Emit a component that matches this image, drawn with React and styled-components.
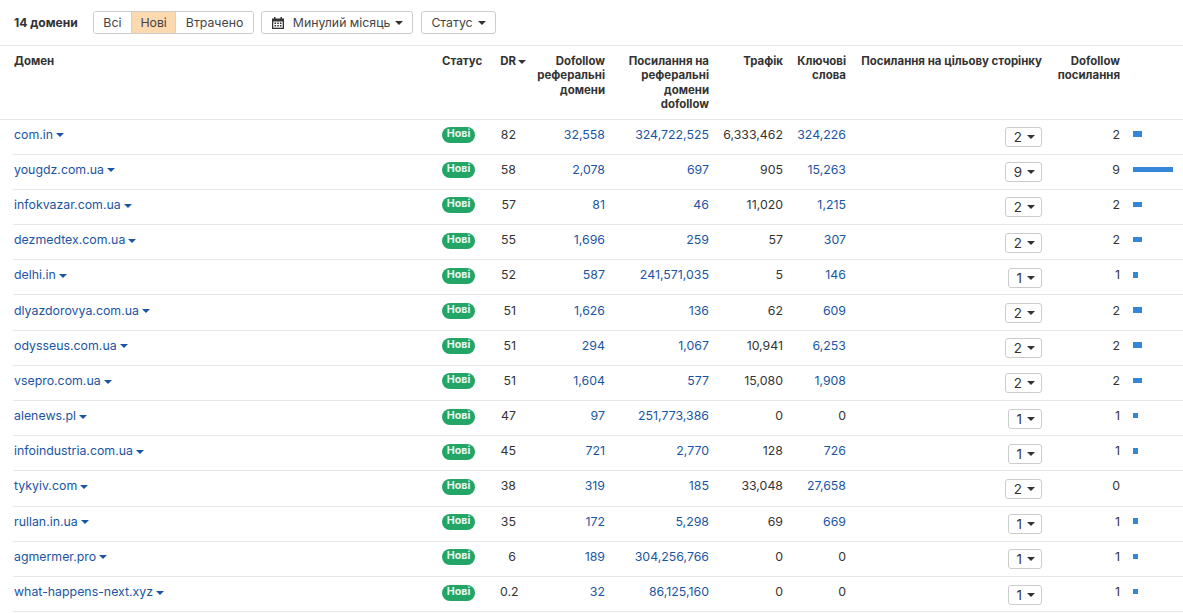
import React from "react";
import styled, { createGlobalStyle } from "styled-components";

const rows = [
  { domain: "com.in", dr: "82", refs: "32,558", links: "324,722,525", traffic: "6,333,462", keywords: "324,226", target: 2, dofollow: 2, bar: 9 },
  { domain: "yougdz.com.ua", dr: "58", refs: "2,078", links: "697", traffic: "905", keywords: "15,263", target: 9, dofollow: 9, bar: 40 },
  { domain: "infokvazar.com.ua", dr: "57", refs: "81", links: "46", traffic: "11,020", keywords: "1,215", target: 2, dofollow: 2, bar: 9 },
  { domain: "dezmedtex.com.ua", dr: "55", refs: "1,696", links: "259", traffic: "57", keywords: "307", target: 2, dofollow: 2, bar: 9 },
  { domain: "delhi.in", dr: "52", refs: "587", links: "241,571,035", traffic: "5", keywords: "146", target: 1, dofollow: 1, bar: 5 },
  { domain: "dlyazdorovya.com.ua", dr: "51", refs: "1,626", links: "136", traffic: "62", keywords: "609", target: 2, dofollow: 2, bar: 9 },
  { domain: "odysseus.com.ua", dr: "51", refs: "294", links: "1,067", traffic: "10,941", keywords: "6,253", target: 2, dofollow: 2, bar: 9 },
  { domain: "vsepro.com.ua", dr: "51", refs: "1,604", links: "577", traffic: "15,080", keywords: "1,908", target: 2, dofollow: 2, bar: 9 },
  { domain: "alenews.pl", dr: "47", refs: "97", links: "251,773,386", traffic: "0", keywords: "0", target: 1, dofollow: 1, bar: 5 },
  { domain: "infoindustria.com.ua", dr: "45", refs: "721", links: "2,770", traffic: "128", keywords: "726", target: 1, dofollow: 1, bar: 5 },
  { domain: "tykyiv.com", dr: "38", refs: "319", links: "185", traffic: "33,048", keywords: "27,658", target: 2, dofollow: 0, bar: 0 },
  { domain: "rullan.in.ua", dr: "35", refs: "172", links: "5,298", traffic: "69", keywords: "669", target: 1, dofollow: 1, bar: 5 },
  { domain: "agmermer.pro", dr: "6", refs: "189", links: "304,256,766", traffic: "0", keywords: "0", target: 1, dofollow: 1, bar: 5 },
  { domain: "what-happens-next.xyz", dr: "0.2", refs: "32", links: "86,125,160", traffic: "0", keywords: "0", target: 1, dofollow: 1, bar: 5 },
];

// gutter, domain, status, dr, refs, links, traffic, keywords, target, dofollow, bar, gutter
const widths = [13, 429, 58, 16, 89, 104, 74, 63, 196, 78, 53, 10];

const GlobalStyle = createGlobalStyle`
  html, body {
    margin: 0;
    background: #fff;
    font-family: Inter, "Noto Sans", sans-serif;
    color: #333;
    overflow: hidden;
  }
`;

const Toolbar = styled.div`
  display: flex;
  align-items: center;
  height: 45px;
  padding-left: 14px;
  border-bottom: 1px solid #e8e8e8;
`;

const Count = styled.div`
  font-size: 12.1px;
  font-weight: 700;
  color: #333;
  margin-right: 15px;
`;

const Segments = styled.div`
  display: flex;
  height: 21px;
  border: 1px solid #ccc;
  border-radius: 3px;
  overflow: hidden;
  margin-right: 7px;
`;

const Segment = styled.div`
  display: flex;
  align-items: center;
  padding: 0 9.5px;
  font-size: 12.3px;
  color: #444;
  background: ${(p) => (p.$active ? "#fdd9b0" : "#fff")};
  box-shadow: ${(p) => (p.$active ? "inset 1px 0 0 #f6cb9b, inset -1px 0 0 #f6cb9b" : "none")};
`;

const FilterButton = styled.div`
  display: flex;
  align-items: center;
  height: 21px;
  padding: 0 9px;
  border: 1px solid #ccc;
  border-radius: 3px;
  font-size: 12.3px;
  color: #444;
  margin-right: 8px;
`;

const CalendarIcon = styled.svg`
  width: 14px;
  height: 14px;
  margin-right: 8px;
`;

const Caret = styled.span`
  display: inline-block;
  width: 0;
  height: 0;
  border-left: 4px solid transparent;
  border-right: 4px solid transparent;
  border-top: 4.5px solid ${(p) => p.$color || "#333"};
  margin-left: ${(p) => p.$gap || 5}px;
  vertical-align: middle;
`;

const Table = styled.table`
  width: 1183px;
  table-layout: fixed;
  border-collapse: collapse;
`;

const HeadCell = styled.th`
  height: 73px;
  box-sizing: border-box;
  padding: 8px 0 0 0;
  vertical-align: top;
  text-align: ${(p) => (p.$left ? "left" : "right")};
  font-size: 11.45px;
  line-height: 14.4px;
  font-weight: 700;
  color: #333;
  border-bottom: 1px solid #e8e8e8;
`;

const DomainHead = styled.span`
  margin-left: 1px;
`;

const SortLabel = styled.span`
  display: inline-block;
  margin-right: -10px;
  white-space: nowrap;
`;

const Row = styled.tr`
  height: 35.2px;
  td {
    border-bottom: 1px solid #e8e8e8;
  }
  td:first-child {
    border-bottom: none;
  }
`;

const Cell = styled.td`
  padding: 0 0 5px 0;
  box-sizing: border-box;
  font-size: 12.35px;
  text-align: ${(p) => (p.$left ? "left" : "right")};
  color: ${(p) => (p.$link ? "#1a55a3" : "#333")};
  white-space: nowrap;
`;

const DomainLink = styled.a`
  color: #1a55a3;
  margin-left: 1px;
`;

const Badge = styled.span`
  display: inline-block;
  width: 33px;
  height: 16px;
  line-height: 14px;
  border-radius: 8px;
  background: #23a566;
  color: #e9f7ef;
  font-size: 10.7px;
  font-weight: 700;
  text-align: center;
`;

const SelectBox = styled.span`
  display: inline-flex;
  align-items: center;
  height: 18px;
  padding: 0 6px 0 8px;
  border: 1px solid #ccc;
  border-radius: 3px;
  font-size: 13.4px;
  color: #333;
  position: relative;
  top: 3px;
`;

const BarCell = styled(Cell)`
  padding-left: 13px;
`;

const Bar = styled.div`
  height: 5.5px;
  background: #3585d8;
`;

export default function App() {
  return (
    <>
      <GlobalStyle />
      <Toolbar>
        <Count>14 домени</Count>
        <Segments>
          <Segment>Всі</Segment>
          <Segment $active>Нові</Segment>
          <Segment>Втрачено</Segment>
        </Segments>
        <FilterButton>
          <CalendarIcon viewBox="0 0 14 14">
            <path fill="#333" d="M3 1h1.5v1.5h5V1H11v1.5h2V13H1V2.5h2z" />
            <path fill="#fff" d="M2.3 5.5h9.4v6.2H2.3z" />
            <path fill="#333" d="M3.5 6.5h1.6v1.5H3.5zM6.2 6.5h1.6v1.5H6.2zM8.9 6.5h1.6v1.5H8.9zM3.5 9h1.6v1.5H3.5zM6.2 9h1.6v1.5H6.2zM8.9 9h1.6v1.5H8.9z" />
          </CalendarIcon>
          Минулий місяць
          <Caret />
        </FilterButton>
        <FilterButton>
          Статус
          <Caret />
        </FilterButton>
      </Toolbar>
      <Table>
        <colgroup>
          {widths.map((w, i) => (
            <col key={i} style={{ width: w }} />
          ))}
        </colgroup>
        <thead>
          <tr>
            <HeadCell />
            <HeadCell $left><DomainHead>Домен</DomainHead></HeadCell>
            <HeadCell $left>Статус</HeadCell>
            <HeadCell>
              <SortLabel>DR<Caret $gap={2} /></SortLabel>
            </HeadCell>
            <HeadCell>Dofollow<br />реферальні<br />домени</HeadCell>
            <HeadCell>Посилання на<br />реферальні<br />домени<br />dofollow</HeadCell>
            <HeadCell>Трафік</HeadCell>
            <HeadCell>Ключові<br />слова</HeadCell>
            <HeadCell>Посилання на цільову сторінку</HeadCell>
            <HeadCell>Dofollow<br />посилання</HeadCell>
            <HeadCell />
            <HeadCell />
          </tr>
        </thead>
        <tbody>
          {rows.map((r) => (
            <Row key={r.domain}>
              <Cell />
              <Cell $left>
                <DomainLink>{r.domain}</DomainLink>
                <Caret $color="#1a55a3" $gap={3} />
              </Cell>
              <Cell $left><Badge>Нові</Badge></Cell>
              <Cell>{r.dr}</Cell>
              <Cell $link>{r.refs}</Cell>
              <Cell $link>{r.links}</Cell>
              <Cell>{r.traffic}</Cell>
              <Cell $link={r.keywords !== "0"}>{r.keywords}</Cell>
              <Cell>
                <SelectBox>{r.target}<Caret $gap={5} /></SelectBox>
              </Cell>
              <Cell>{r.dofollow}</Cell>
              <BarCell $left>
                {r.bar > 0 && <Bar style={{ width: r.bar }} />}
              </BarCell>
              <Cell />
            </Row>
          ))}
        </tbody>
      </Table>
    </>
  );
}
